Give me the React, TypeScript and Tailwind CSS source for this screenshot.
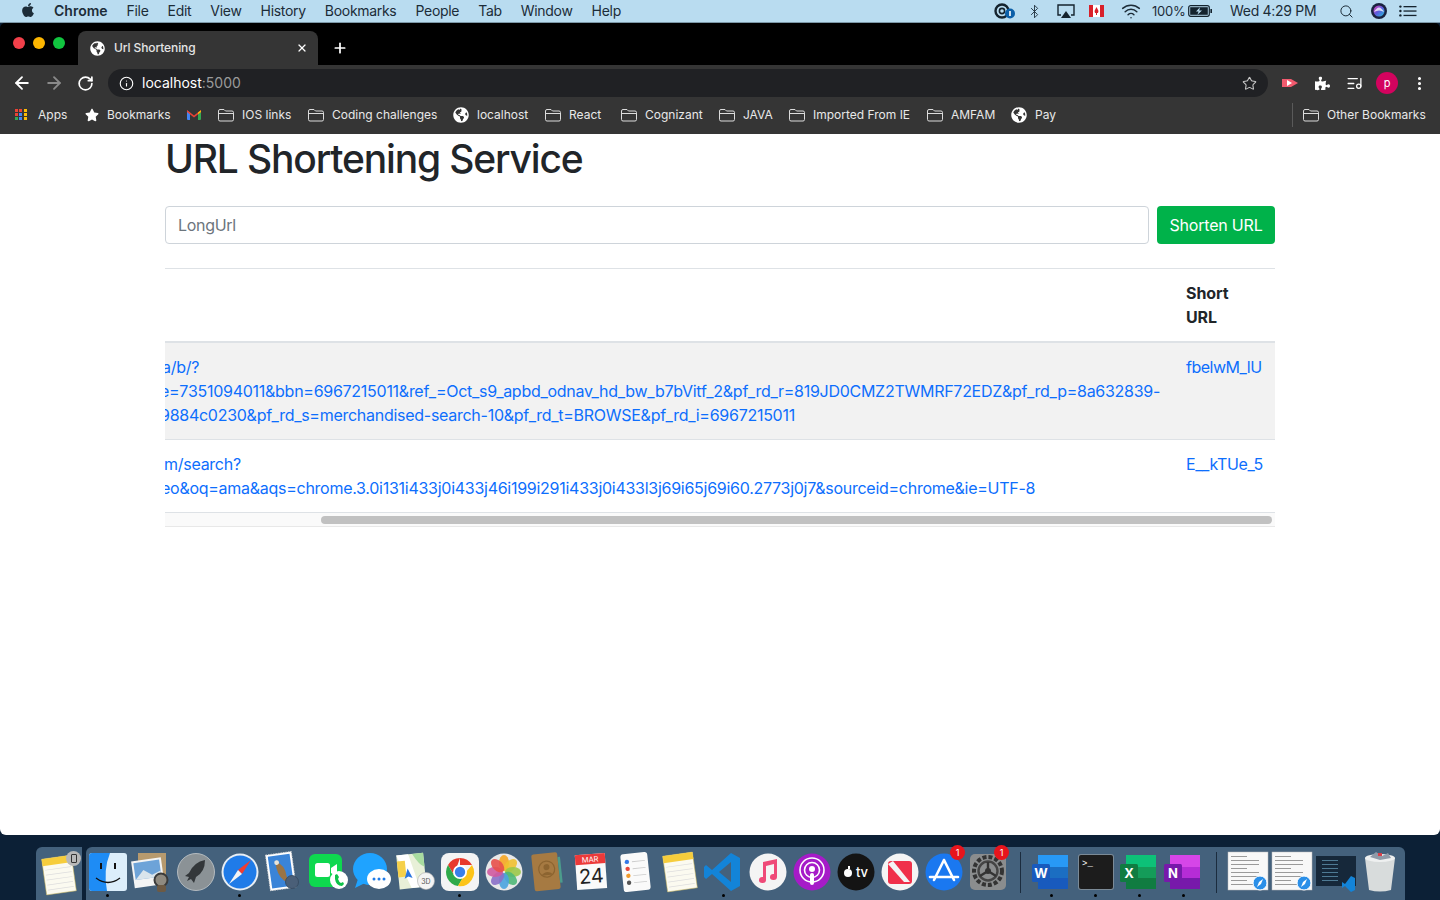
import type { ReactNode } from 'react';
import { ArrowLeft, ArrowRight, Bluetooth, Info, ListMusic, MoreVertical, Plus, RotateCw, Search, Star, Wifi, X } from 'lucide-react';
import { FaApple, FaGlobeAmericas, FaPuzzlePiece, FaStar } from 'react-icons/fa';

const menus = ['File', 'Edit', 'View', 'History', 'Bookmarks', 'People', 'Tab', 'Window', 'Help'];

function Globe({ size = 16 }: { size?: number }) {
  return <FaGlobeAmericas size={size} className="text-white shrink-0" />;
}

function FolderIcon() {
  return (
    <svg width="16" height="14" viewBox="0 0 16 14" fill="none" stroke="#dcdcdc" strokeWidth="1" className="shrink-0">
      <path d="M0.5 3 A1.5 1.5 0 0 1 2 1.5 H6 L7.5 3 H14 A1.5 1.5 0 0 1 15.5 4.5 V11.5 A1.5 1.5 0 0 1 14 13 H2 A1.5 1.5 0 0 1 0.5 11.5 Z" />
      <path d="M0.5 5.5 H15.5" />
    </svg>
  );
}

function AppsGrid() {
  const colors = ['#ea4335', '#ea4335', '#fbbc05', '#ea4335', '#4285f4', '#fbbc05', '#34a853', '#4285f4', '#fbbc05'];
  return (
    <div className="grid grid-cols-3 gap-[1px] w-3 h-3 shrink-0 mr-[3px]">
      {colors.map((c, i) => (
        <span key={i} className="block w-[3px] h-[3px]" style={{ background: c }} />
      ))}
    </div>
  );
}

function Gmail() {
  return (
    <svg width="14" height="11" viewBox="0 0 14 11" className="shrink-0">
      <path d="M0 1.5 L3 3.5 V11 H1 A1 1 0 0 1 0 10 Z" fill="#4285f4" />
      <path d="M14 1.5 L11 3.5 V11 H13 A1 1 0 0 0 14 10 Z" fill="#34a853" />
      <path d="M0 1 L7 6.5 L14 1 V3 L7 8.5 L0 3 Z" fill="#ea4335" />
      <path d="M11 3.5 L14 1.2 V3 L11 5.2 Z" fill="#fbbc05" />
    </svg>
  );
}

function Bookmark({ icon, label, width }: { icon: ReactNode; label: string; width: string }) {
  return (
    <div className={`flex items-center gap-2 shrink-0 ${width}`}>
      {icon}
      <span className="text-xs text-[#e8e8e8] whitespace-nowrap">{label}</span>
    </div>
  );
}

function MenuBar() {
  return (
    <div className="h-[23px] shrink-0 bg-[#b9dcf0] border-b border-[#7d98a8] flex items-center text-[#1c2c38] text-sm pl-[20px]">
      <FaApple size={16} className="mb-[2px]" />
      <div className="flex items-center gap-[19px] ml-[18px] tracking-[-0.3px]">
        <span className="font-semibold tracking-normal">Chrome</span>
        {menus.map((m) => (
          <span key={m}>{m}</span>
        ))}
      </div>
      <div className="ml-auto flex items-center h-full pr-[23px]">
        <svg width="22" height="16" viewBox="0 0 22 16" className="mr-[11px]">
          <circle cx="8" cy="8" r="6.5" fill="none" stroke="#14232e" strokeWidth="2.4" />
          <circle cx="8" cy="8" r="2.6" fill="none" stroke="#14232e" strokeWidth="1.6" />
          <circle cx="16" cy="10.5" r="5" fill="#0b5fa8" />
          <rect x="15.2" y="8" width="1.6" height="5" fill="#fff" />
        </svg>
        <Bluetooth size={15} strokeWidth={1.4} className="mr-[15px]" />
        <svg width="18" height="15" viewBox="0 0 18 15" className="mr-[14px]">
          <path d="M4 11 H1 V1 H17 V11 H14" fill="none" stroke="#14232e" strokeWidth="1.4" />
          <path d="M9 7 L14 14 H4 Z" fill="#14232e" />
        </svg>
        <svg width="15" height="12" viewBox="0 0 15 12" className="mr-[17px]">
          <rect width="15" height="12" fill="#fff" />
          <rect width="4" height="12" fill="#d8202a" />
          <rect x="11" width="4" height="12" fill="#d8202a" />
          <path d="M7.5 2 L9.5 6 L9 8 H8 V10 H7 V8 H6 L5.5 6 Z" fill="#d8202a" />
        </svg>
        <Wifi size={20} strokeWidth={1.8} className="mr-[11px]" />
        <span className="text-[13px] w-[34px] tracking-[-0.2px]">100%</span>
        <svg width="25" height="12" viewBox="0 0 25 12" className="ml-[2px] mr-[17px]">
          <rect x="0.7" y="0.7" width="20.6" height="10.6" rx="2" fill="none" stroke="#14232e" strokeWidth="1.2" />
          <rect x="2.2" y="2.2" width="17.6" height="7.6" fill="#14232e" />
          <rect x="22.4" y="4" width="1.6" height="4" fill="#14232e" />
          <path d="M12 2.2 L8 6.4 H10.6 L9.4 9.8 L14 5.4 H11.2 Z" fill="#b9dcf0" />
        </svg>
        <span className="w-[109px] tracking-[-0.3px] whitespace-nowrap">Wed 4:29 PM</span>
        <Search size={15} strokeWidth={1.6} className="mr-[17px]" />
        <svg width="16" height="16" viewBox="0 0 16 16" className="mr-[12px]">
          <defs>
            <linearGradient id="siri" x1="0" y1="0" x2="1" y2="1">
              <stop offset="0" stopColor="#e23fb0" />
              <stop offset="0.5" stopColor="#5c5ce0" />
              <stop offset="1" stopColor="#23c2d8" />
            </linearGradient>
          </defs>
          <circle cx="8" cy="8" r="8" fill="#1a2240" />
          <circle cx="8" cy="8" r="5.5" fill="url(#siri)" />
          <path d="M3 9 Q8 0 13 9 Q8 6 3 9" fill="#fff" opacity="0.75" />
        </svg>
        <svg width="18" height="12" viewBox="0 0 18 12" fill="#14232e">
          <circle cx="1.4" cy="1.6" r="1.2" />
          <circle cx="1.4" cy="6" r="1.2" />
          <circle cx="1.4" cy="10.4" r="1.2" />
          <rect x="4.5" y="1" width="13" height="1.3" />
          <rect x="4.5" y="5.4" width="13" height="1.3" />
          <rect x="4.5" y="9.8" width="13" height="1.3" />
        </svg>
      </div>
    </div>
  );
}

function BrowserChrome() {
  return (
    <div className="shrink-0">
      <div className="h-[42px] bg-black rounded-t-[5px] flex items-end">
        <div className="flex items-center gap-2 w-[78px] h-full pl-[13px] pb-[2px]">
          <span className="w-3 h-3 rounded-full bg-[#f2404a]" />
          <span className="w-3 h-3 rounded-full bg-[#fdb600]" />
          <span className="w-3 h-3 rounded-full bg-[#11c53f]" />
        </div>
        <div className="w-[240px] h-[34px] bg-[#353535] rounded-t-lg flex items-center pl-3 pr-[10px]">
          <Globe size={15} />
          <span className="ml-[9px] text-xs font-medium text-[#e4e4e4] tracking-[-0.1px]">Url Shortening</span>
          <X size={12} strokeWidth={2.4} className="ml-auto text-white" />
        </div>
        <Plus size={16} strokeWidth={2.6} className="ml-[14px] mb-[9px] text-white" />
      </div>
      <div className="bg-[#353535] h-[69px] flex flex-col">
        <div className="flex items-end h-8 pl-3">
          <div className="flex items-center gap-[12px] w-[96px] h-7">
            <ArrowLeft size={20} strokeWidth={2.2} className="text-white" />
            <ArrowRight size={20} strokeWidth={2.2} className="text-[#8a8a8a]" />
            <RotateCw size={17} strokeWidth={2.4} className="text-white ml-[1px]" />
          </div>
          <div className="w-[1160px] h-7 bg-[#202124] rounded-full flex items-center pl-[11px] pr-[11px]">
            <Info size={15} strokeWidth={1.8} className="text-white" />
            <span className="ml-[8px] text-sm text-white">
              localhost<span className="text-[#9a9a9a]">:5000</span>
            </span>
            <Star size={15} strokeWidth={1.7} className="ml-auto text-[#c8c8c8]" />
          </div>
          <div className="flex items-center h-7 ml-[14px]">
            <svg width="16" height="12" viewBox="0 0 16 12">
              <path d="M0 2 H9 L16 6 L9 10 H0 Z" fill="#f25a6e" />
              <path d="M5 3 L10 6 L5 9 Z" fill="#fff" />
            </svg>
            <FaPuzzlePiece size={15} className="text-white ml-[17px]" />
            <ListMusic size={17} strokeWidth={1.8} className="text-white ml-[16px]" />
            <span className="ml-[13px] w-[22px] h-[22px] rounded-full bg-[#d3035e] text-white text-[11px] flex items-center justify-center">p</span>
            <MoreVertical size={17} strokeWidth={2.4} className="text-white ml-[13px]" />
          </div>
        </div>
        <div className="flex items-center h-[37px] pl-[15px] pb-[2px]">
          <Bookmark width="w-[69px]" icon={<AppsGrid />} label="Apps" />
          <Bookmark width="w-[103px]" icon={<FaStar size={14} className="text-white shrink-0 ml-[1px]" />} label="Bookmarks" />
          <Bookmark width="w-[31px]" icon={<Gmail />} label="" />
          <Bookmark width="w-[90px]" icon={<FolderIcon />} label="IOS links" />
          <Bookmark width="w-[145px]" icon={<FolderIcon />} label="Coding challenges" />
          <Bookmark width="w-[92px]" icon={<Globe />} label="localhost" />
          <Bookmark width="w-[76px]" icon={<FolderIcon />} label="React" />
          <Bookmark width="w-[98px]" icon={<FolderIcon />} label="Cognizant" />
          <Bookmark width="w-[70px]" icon={<FolderIcon />} label="JAVA" />
          <Bookmark width="w-[138px]" icon={<FolderIcon />} label="Imported From IE" />
          <Bookmark width="w-[84px]" icon={<FolderIcon />} label="AMFAM" />
          <Bookmark width="w-[100px]" icon={<Globe />} label="Pay" />
          <div className="ml-[181px] w-px h-6 bg-[#5a5a5a]" />
          <div className="ml-[10px]">
            <Bookmark width="w-[122px]" icon={<FolderIcon />} label="Other Bookmarks" />
          </div>
        </div>
      </div>
    </div>
  );
}

function ClippedLine({ children, shift }: { children: string; shift: string }) {
  return <div className={`whitespace-nowrap ${shift}`}>{children}</div>;
}

function UrlTable() {
  return (
    <div className="overflow-hidden border-t border-[#dee2e6] mt-[24px] text-base leading-6">
      <div className="flex h-[74px] border-b-2 border-[#dee2e6]">
        <div className="w-[1009px]" />
        <div className="pl-3 pt-[12px] font-bold text-[#212529] tracking-[-0.1px]">
          Short
          <br />
          URL
        </div>
      </div>
      <div className="flex h-[97px] bg-[#f2f2f2] border-b border-[#dee2e6] text-[#0d6efd]">
        <div className="w-[1009px] pt-3 overflow-hidden tracking-[-0.27px]">
          <ClippedLine shift="-ml-[3px]">a/b/?</ClippedLine>
          <ClippedLine shift="-ml-[5px]">e=7351094011&bbn=6967215011&ref_=Oct_s9_apbd_odnav_hd_bw_b7bVitf_2&pf_rd_r=819JD0CMZ2TWMRF72EDZ&pf_rd_p=8a632839-</ClippedLine>
          <ClippedLine shift="-ml-[5px]">9884c0230&pf_rd_s=merchandised-search-10&pf_rd_t=BROWSE&pf_rd_i=6967215011</ClippedLine>
        </div>
        <div className="pl-3 pt-3 whitespace-nowrap tracking-[-0.5px]">fbelwM_lU</div>
      </div>
      <div className="flex h-[73px] border-b border-[#dee2e6] text-[#0d6efd]">
        <div className="w-[1009px] pt-3 overflow-hidden tracking-[-0.27px]">
          <ClippedLine shift="-ml-[1px]">m/search?</ClippedLine>
          <ClippedLine shift="-ml-[4px]">eo&oq=ama&aqs=chrome.3.0i131i433j0i433j46i199i291i433j0i433l3j69i65j69i60.2773j0j7&sourceid=chrome&ie=UTF-8</ClippedLine>
        </div>
        <div className="pl-3 pt-3 whitespace-nowrap tracking-[-0.4px]">E__kTUe_5</div>
      </div>
      <div className="h-[14px] bg-[#fafafa] border-b border-[#e8e8e8] flex items-center">
        <div className="ml-[156px] w-[951px] h-2 rounded-full bg-[#c1c1c1]" />
      </div>
    </div>
  );
}

function Page() {
  return (
    <main className="flex-1 bg-white rounded-b-[6px] text-[#212529]">
      <div className="w-[1110px] mx-auto">
        <h1 className="text-[39px] leading-[48px] font-medium mt-px tracking-[-1.16px]">URL Shortening Service</h1>
        <div className="flex gap-2 mt-[23px]">
          <div className="flex-1 h-[38px] border border-[#ced4da] rounded px-3 flex items-center text-[#6c757d] text-base tracking-[-0.3px]">LongUrl</div>
          <button className="w-[118px] h-[38px] rounded bg-[#00b24a] text-white text-base tracking-[-0.2px]">Shorten URL</button>
        </div>
        <UrlTable />
      </div>
    </main>
  );
}

function DockIcon({ children, dot, badge }: { children: ReactNode; dot?: boolean; badge?: boolean }) {
  return (
    <div className="relative w-11 h-full shrink-0 pt-[3px]">
      <svg width="44" height="44" viewBox="0 0 44 44">
        {children}
      </svg>
      {badge && (
        <span className="absolute top-[-2px] right-[1px] w-[15px] h-[15px] rounded-full bg-[#e8141c] text-white text-[9px] flex items-center justify-center">1</span>
      )}
      {dot && <span className="absolute bottom-[3px] left-[20px] w-[3px] h-[3px] rounded-full bg-black" />}
    </div>
  );
}

function NotesPad() {
  return (
    <g>
      <g transform="rotate(-8 22 22)">
        <rect x="7" y="4" width="30" height="36" fill="#fbfaf0" stroke="#c9b458" strokeWidth="0.5" />
        <rect x="7" y="4" width="30" height="7" fill="#f6cd3c" />
        {[15, 20, 25, 30, 35].map((y) => (
          <rect key={y} x="9" y={y} width="26" height="0.7" fill="#ddd" />
        ))}
      </g>
    </g>
  );
}

function DocThumb() {
  return (
    <g>
      <rect x="2" y="2" width="40" height="38" fill="#f8f8f8" stroke="#bbb" strokeWidth="0.5" />
      {[6, 10, 14, 18, 22, 26, 30, 34].map((y, i) => (
        <rect key={y} x="5" y={y} width={i % 3 === 0 ? 16 : 28} height="1" fill="#9a9a9a" />
      ))}
      <circle cx="34" cy="33" r="7" fill="#2a8fe8" stroke="#fff" strokeWidth="1" />
      <path d="M37 29 L35 34 L31 37 L33 32 Z" fill="#fff" />
    </g>
  );
}

function OfficeTile({ a, b, c, letter }: { a: string; b: string; c: string; letter: string }) {
  return (
    <g>
      <rect x="8" y="5" width="30" height="12" fill={a} />
      <rect x="8" y="17" width="30" height="11" fill={b} />
      <rect x="8" y="28" width="30" height="11" fill={c} />
      <rect x="2" y="14" width="18" height="18" rx="1.5" fill={c} />
      <text x="11" y="28" textAnchor="middle" fontSize="13" fontWeight="700" fill="#fff" fontFamily="Inter, sans-serif">
        {letter}
      </text>
    </g>
  );
}

function Dock() {
  return (
    <div className="h-[65px] shrink-0 flex items-end pl-9 bg-[#0c2036]">
      <div className="h-[53px] w-[46px] bg-[#44617c] rounded-tl-[6px] relative mr-[4px] shrink-0">
        <div className="absolute left-[1px] top-[3px]">
          <DockIcon><NotesPad /></DockIcon>
        </div>
        <div className="absolute right-[1px] top-[4px] w-[15px] h-[15px] rounded-full bg-[#b8b8b8] flex items-center justify-center">
          <span className="block w-[6px] h-[9px] border border-[#333] rounded-[1px]" />
        </div>
      </div>
      <div className="h-[53px] w-[1319px] bg-[#44617c] rounded-t-[6px] flex shrink-0">
        <DockIcon dot>
          <rect x="3" y="3" width="38" height="38" rx="3" fill="#dceefb" />
          <path d="M3 6 a3 3 0 0 1 3 -3 H24 Q17 20 21 41 H6 a3 3 0 0 1 -3 -3 Z" fill="#1e8cf5" />
          <rect x="14" y="13" width="2" height="6" fill="#111" />
          <rect x="28" y="13" width="2" height="6" fill="#111" />
          <path d="M10 28 Q22 37 34 28" fill="none" stroke="#111" strokeWidth="1.3" />
        </DockIcon>
        <DockIcon>
          <rect x="8" y="3" width="28" height="24" fill="#b79a6e" />
          <g transform="rotate(-8 20 24)">
            <rect x="3" y="9" width="30" height="27" fill="#f4f4f4" />
            <rect x="5" y="11" width="26" height="17" fill="#6da3d8" />
            <path d="M5 28 L14 19 L22 25 L31 22 V28 Z" fill="#d9e4ec" />
          </g>
          <circle cx="31" cy="30" r="6.5" fill="#8f8a80" stroke="#3a3a3a" strokeWidth="2" />
          <rect x="27" y="35" width="9" height="7" rx="2" fill="#6d5a44" />
        </DockIcon>
        <DockIcon>
          <circle cx="22" cy="22" r="18.5" fill="#8b9296" stroke="#c8cccd" strokeWidth="0.8" />
          <path d="M31 10 Q20 12 15 23 L11 26 L15 27 L13 31 L17 29 L20 33 L22 27 Q31 22 31 10 Z" fill="#33373a" />
        </DockIcon>
        <DockIcon dot>
          <circle cx="22" cy="22" r="18.5" fill="#e8eef4" />
          <circle cx="22" cy="22" r="16.5" fill="#1f7be8" />
          <path d="M33 10 L24 24 L20 20 Z" fill="#f23c30" />
          <path d="M11 34 L20 20 L24 24 Z" fill="#f4f4f4" />
        </DockIcon>
        <DockIcon>
          <g transform="rotate(-8 20 22)">
            <rect x="6" y="3" width="26" height="36" fill="#fff" stroke="#ddd" strokeDasharray="1.5 1" strokeWidth="0.8" />
            <rect x="8" y="5" width="22" height="32" fill="#3a84d8" />
            <path d="M15 11 Q24 15 24 27 L27 33 L21 31 Q14 24 15 11 Z" fill="#9a7445" />
            <circle cx="16" cy="12" r="2.4" fill="#e8e4da" />
          </g>
          <circle cx="30" cy="32" r="6.5" fill="#4a5f78" stroke="#33465c" strokeWidth="0.8" />
        </DockIcon>
        <DockIcon>
          <rect x="3" y="4" width="33" height="33" rx="6" fill="#0ed84f" />
          <rect x="9" y="13" width="15" height="14" rx="2.5" fill="#fff" />
          <path d="M25 18 L31 14 V27 L25 23 Z" fill="#fff" />
          <circle cx="33" cy="30" r="9" fill="#fff" />
          <path d="M29 25 L31 24 L33 27 L32 29 Q33 32 35 33 L37 32 L38 34 L36 36 Q30 36 29 29 Z" fill="#0ec24a" />
        </DockIcon>
        <DockIcon>
          <ellipse cx="20" cy="19" rx="17" ry="16" fill="#1fa3ff" />
          <path d="M8 29 L5 38 L15 33 Z" fill="#1fa3ff" />
          <ellipse cx="29" cy="29" rx="12" ry="10" fill="#fff" />
          <circle cx="24" cy="29" r="1.5" fill="#1f7be8" />
          <circle cx="29" cy="29" r="1.5" fill="#1f7be8" />
          <circle cx="34" cy="29" r="1.5" fill="#1f7be8" />
        </DockIcon>
        <DockIcon>
          <g transform="rotate(-6 18 22)">
            <rect x="4" y="4" width="27" height="34" fill="#e8f0d8" />
            <path d="M4 4 H16 L24 38 H16 Z" fill="#fff" />
            <path d="M4 10 H12 V26 H4 Z" fill="#f5d04a" />
            <path d="M20 4 Q26 16 31 18 V4 Z" fill="#a8dca0" />
            <path d="M14 18 L18 28 L14 26 L10 28 Z" fill="#2a76e0" />
          </g>
          <circle cx="32" cy="31" r="8.5" fill="#f4f4f4" stroke="#aaa" strokeWidth="0.6" />
          <text x="32" y="34" textAnchor="middle" fontSize="7" fill="#555" fontFamily="Inter, sans-serif">3D</text>
        </DockIcon>
        <DockIcon dot>
          <rect x="3" y="3" width="38" height="38" rx="8" fill="#f4f4f4" />
          <path d="M22 8 A14 14 0 0 1 34 15 H22 Z M22 8 A14 14 0 0 0 10 15 L16 25 Z" fill="#e8392c" />
          <path d="M10 15 A14 14 0 0 0 20 36 L26 26 L16 25 Z" fill="#2faa4a" />
          <path d="M34 15 A14 14 0 0 1 20 36 L28 22 Z" fill="#fcc419" />
          <circle cx="22" cy="22" r="7" fill="#fff" />
          <circle cx="22" cy="22" r="5.2" fill="#3a7fe8" />
        </DockIcon>
        <DockIcon>
          <circle cx="22" cy="22" r="18.5" fill="#e8e8e8" />
          {[
            ['#f6a623', 0], ['#f0c030', 45], ['#9bc848', 90], ['#4fb878', 135],
            ['#4aa3df', 180], ['#8a70c8', 225], ['#d05aa0', 270], ['#e8504a', 315],
          ].map(([c, r]) => (
            <ellipse key={r as number} cx="22" cy="13" rx="5" ry="8" fill={c as string} opacity="0.9" transform={`rotate(${r} 22 22)`} />
          ))}
        </DockIcon>
        <DockIcon>
          <g transform="rotate(-6 22 22)">
            <rect x="7" y="3" width="26" height="37" rx="2" fill="#a67a42" />
            <rect x="33" y="8" width="2.5" height="26" fill="#4c9c8c" />
            <circle cx="21" cy="19" r="8" fill="none" stroke="#8c6430" strokeWidth="1.2" />
            <circle cx="21" cy="17" r="3" fill="#8c6430" />
            <path d="M15 25 Q21 19 27 25" fill="#8c6430" />
          </g>
        </DockIcon>
        <DockIcon>
          <g transform="rotate(-4 22 22)">
            <rect x="6" y="4" width="30" height="35" fill="#fafafa" />
            <rect x="6" y="4" width="30" height="10" fill="#ec3a3a" />
            <text x="21" y="12" textAnchor="middle" fontSize="7.5" fill="#fff" fontFamily="Inter, sans-serif">MAR</text>
            <text x="21" y="33" textAnchor="middle" fontSize="20" fill="#222" fontFamily="Inter, sans-serif">24</text>
          </g>
        </DockIcon>
        <DockIcon>
          <g transform="rotate(-6 22 22)">
            <rect x="8" y="3" width="27" height="38" rx="3" fill="#fafafa" />
            <circle cx="14" cy="11" r="2.2" fill="#3478e8" />
            <circle cx="14" cy="18" r="2.2" fill="#e8453a" />
            <circle cx="14" cy="25" r="2.2" fill="#f09a2c" />
            <circle cx="14" cy="32" r="2.2" fill="#555" />
            {[11, 18, 25, 32].map((y) => (
              <rect key={y} x="19" y={y} width="13" height="0.8" fill="#ccc" />
            ))}
          </g>
        </DockIcon>
        <DockIcon><NotesPad /></DockIcon>
        <DockIcon dot>
          <path d="M29 3 L38 8 V36 L29 41 L10 24 L4 29 L2 27 V17 L4 15 L10 20 Z" fill="#1384d8" />
          <path d="M29 12 L17 22 L29 32 Z" fill="#44617c" />
        </DockIcon>
        <DockIcon>
          <circle cx="22" cy="22" r="18.5" fill="#f4f4f4" />
          <path d="M17 12 L31 9 V27 A3.5 3 0 1 1 28 24 V14 L20 16 V30 A3.5 3 0 1 1 17 27 Z" fill="#ef4a78" />
        </DockIcon>
        <DockIcon>
          <circle cx="22" cy="22" r="18.5" fill="#a61bc8" />
          <circle cx="22" cy="20" r="12" fill="none" stroke="#fff" strokeWidth="1.6" />
          <circle cx="22" cy="20" r="7.5" fill="none" stroke="#fff" strokeWidth="1.6" />
          <circle cx="22" cy="19" r="3" fill="#fff" />
          <rect x="20" y="23" width="4" height="12" rx="2" fill="#fff" />
        </DockIcon>
        <DockIcon>
          <circle cx="22" cy="22" r="18.5" fill="#141414" />
          <text x="28" y="27" textAnchor="middle" fontSize="13" fontWeight="500" fill="#fff" fontFamily="Inter, sans-serif">tv</text>
          <circle cx="14" cy="23" r="4" fill="#fff" />
          <rect x="14" y="16" width="2" height="3" fill="#fff" />
        </DockIcon>
        <DockIcon>
          <circle cx="22" cy="22" r="18.5" fill="#f4f4f4" />
          <rect x="10" y="11" width="24" height="23" rx="3" fill="#f0304a" />
          <path d="M15 11 L32 32 H26 L10 14 Z" fill="#f4f4f4" />
        </DockIcon>
        <DockIcon badge>
          <circle cx="22" cy="22" r="18.5" fill="#1a78f0" />
          <path d="M22 10 L32 30 M22 10 L12 30 M8 27 H36" stroke="#fff" strokeWidth="2.6" strokeLinecap="round" fill="none" />
        </DockIcon>
        <DockIcon badge>
          <rect x="4" y="4" width="36" height="36" rx="5" fill="#8b8d8e" />
          <circle cx="22" cy="21" r="14" fill="none" stroke="#333" strokeWidth="4" strokeDasharray="4 2" />
          <circle cx="22" cy="21" r="9.5" fill="none" stroke="#444" strokeWidth="2.4" />
          <circle cx="22" cy="21" r="3" fill="#333" />
          <path d="M22 12 V21 L14 26 M22 21 L30 26" stroke="#333" strokeWidth="2.4" fill="none" />
        </DockIcon>
        <div className="w-5 h-full shrink-0 flex justify-center pt-[5px] pb-[3px]">
          <div className="w-px h-[41px] bg-[#1b2c3e]" />
        </div>
        <DockIcon dot><OfficeTile a="#2899f5" b="#1b6ec2" c="#185abd" letter="W" /></DockIcon>
        <DockIcon dot>
          <rect x="4" y="4" width="36" height="36" rx="3" fill="#7b8a96" />
          <rect x="5" y="5" width="34" height="34" rx="2" fill="#1c1c1c" />
          <text x="8" y="16" fontSize="9" fill="#fff" fontFamily="'Liberation Mono', monospace">&gt;_</text>
        </DockIcon>
        <DockIcon dot><OfficeTile a="#0dc178" b="#149c59" c="#107c41" letter="X" /></DockIcon>
        <DockIcon dot><OfficeTile a="#d646e8" b="#b62cd6" c="#7719aa" letter="N" /></DockIcon>
        <div className="w-5 h-full shrink-0 flex justify-center pt-[5px] pb-[3px]">
          <div className="w-px h-[41px] bg-[#1b2c3e]" />
        </div>
        <DockIcon><DocThumb /></DockIcon>
        <DockIcon><DocThumb /></DockIcon>
        <DockIcon>
          <rect x="2" y="6" width="40" height="30" fill="#16283a" />
          {[10, 14, 18, 22, 26, 30].map((y) => (
            <rect key={y} x="8" y={y} width="16" height="1" fill="#4e7a94" />
          ))}
          <path d="M37 26 L41 28 V40 L37 42 L31 36 L28 38 V32 L31 34 Z" fill="#1384d8" />
        </DockIcon>
        <DockIcon>
          <path d="M7 8 H37 L33 40 Q22 43 11 40 Z" fill="#d8dcdc" />
          <ellipse cx="22" cy="8" rx="15" ry="4" fill="#eef0f0" />
          <path d="M12 7 L18 2 L24 6 L30 3 L33 8 L22 10 Z" fill="#8f9aa8" />
          <rect x="20" y="3" width="4" height="3" fill="#d8404a" />
        </DockIcon>
      </div>
    </div>
  );
}

export default function App() {
  return (
    <div className="w-[1440px] h-[900px] overflow-hidden flex flex-col bg-[#0c2036] font-['Inter',sans-serif]">
      <MenuBar />
      <BrowserChrome />
      <Page />
      <Dock />
    </div>
  );
}
